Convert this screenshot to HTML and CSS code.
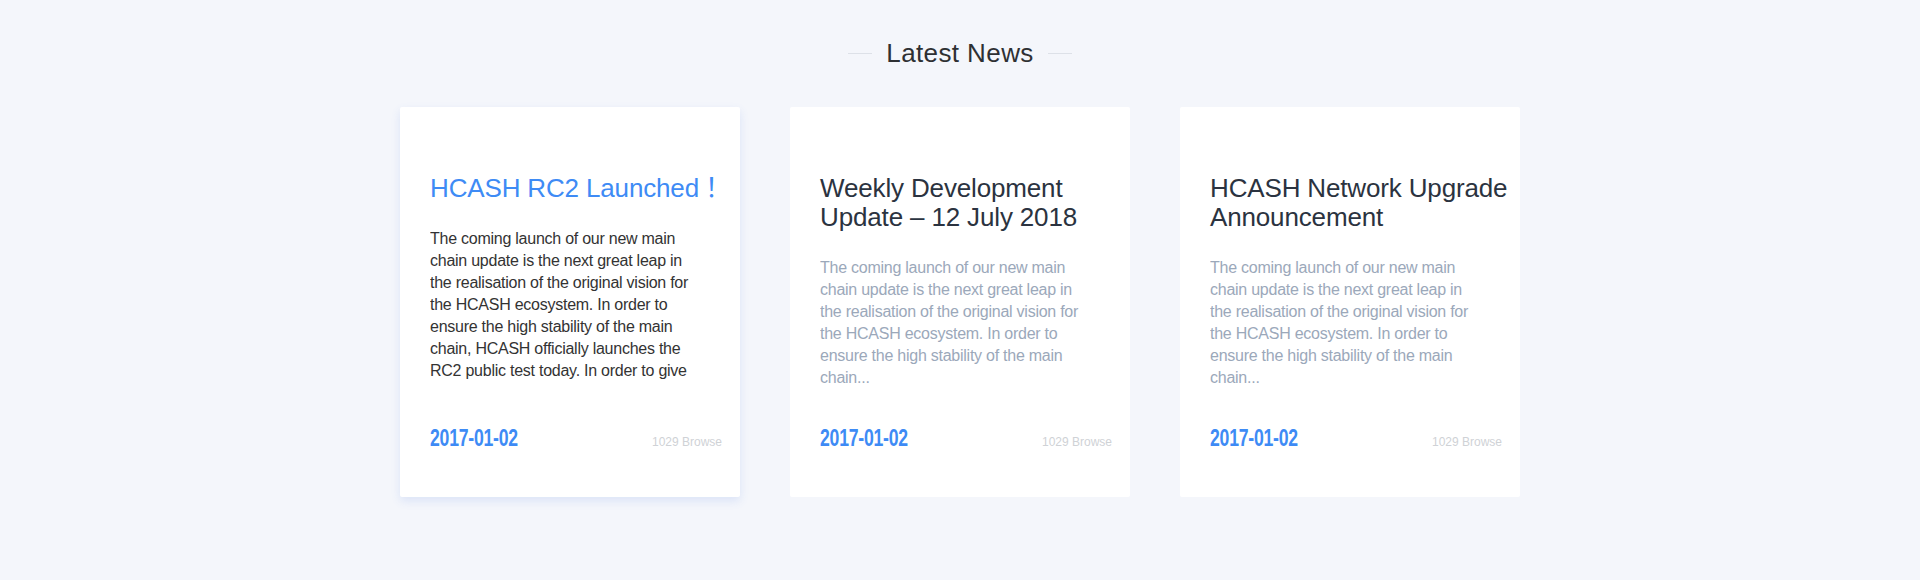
FILE: index.html
```html
<!DOCTYPE html>
<html lang="en">
<head>
<meta charset="utf-8">
<title>Latest News</title>
<link rel="stylesheet" href="styles.css">
</head>
<body>
<section class="news">
  <h2 class="news-heading"><span class="rule"></span><span class="heading-text">Latest News</span><span class="rule"></span></h2>
  <div class="news-list">
    <article class="card card--active">
      <div class="card-text">
        <h3 class="card-title">HCASH RC2 Launched<span class="bang">！</span></h3>
        <p class="card-excerpt">The coming launch of our new main chain update is the next great leap in the realisation of the original vision for the HCASH ecosystem. In order to ensure the high stability of the main chain, HCASH officially launches the RC2 public test today. In order to give the community more time to test the new features</p>
      </div>
      <div class="card-footer">
        <span class="card-date">2017-01-02</span>
        <span class="card-views">1029 Browse</span>
      </div>
    </article>
    <article class="card">
      <div class="card-text">
        <h3 class="card-title">Weekly Development Update – 12 July 2018</h3>
        <p class="card-excerpt">The coming launch of our new main chain update is the next great leap in the realisation of the original vision for the HCASH ecosystem. In order to ensure the high stability of the main chain...</p>
      </div>
      <div class="card-footer">
        <span class="card-date">2017-01-02</span>
        <span class="card-views">1029 Browse</span>
      </div>
    </article>
    <article class="card">
      <div class="card-text">
        <h3 class="card-title">HCASH Network Upgrade Announcement</h3>
        <p class="card-excerpt">The coming launch of our new main chain update is the next great leap in the realisation of the original vision for the HCASH ecosystem. In order to ensure the high stability of the main chain...</p>
      </div>
      <div class="card-footer">
        <span class="card-date">2017-01-02</span>
        <span class="card-views">1029 Browse</span>
      </div>
    </article>
  </div>
</section>
</body>
</html>
```

FILE: styles.css
```css
* { box-sizing: border-box; }
html, body {
  margin: 0;
  padding: 0;
  background: #f4f6fb;
}
body {
  font-family: "Liberation Sans", Arial, "Noto Sans CJK SC", sans-serif;
  color: #333;
  min-height: 580px;
}
.news {
  padding-top: 38px;
}
.news-heading {
  margin: 0;
  display: flex;
  justify-content: center;
  align-items: center;
  gap: 14px;
  font-size: 26px;
  line-height: 30px;
  font-weight: normal;
  color: #2e3033;
  letter-spacing: 0.4px;
}
.rule {
  width: 24px;
  height: 1px;
  background: #dde1e8;
}
.news-list {
  margin-top: 39px;
  display: flex;
  justify-content: center;
  gap: 50px;
}
.card {
  width: 340px;
  height: 390px;
  background: #fff;
  border-radius: 2px;
  padding: 67px 2px 0 30px;
  display: flex;
  flex-direction: column;
}
.card--active {
  box-shadow: 0 4px 10px rgba(70, 120, 230, 0.14);
}
.card-title {
  margin: 0;
  font-size: 26px;
  line-height: 29px;
  font-weight: normal;
  color: #2b3340;
  letter-spacing: -0.15px;
}
.bang {
  font-family: "Noto Sans CJK SC", sans-serif;
  line-height: 0;
  margin-left: 6px;
}
.card--active .card-title { color: #3e8bf5; }
.card-excerpt {
  margin: 25px 0 0;
  width: 266px;
  font-size: 16px;
  letter-spacing: -0.25px;
  line-height: 22px;
  color: #9ba8ba;
  max-height: 154px;
  overflow: hidden;
}
.card--active .card-excerpt { color: #333; }
.card-footer {
  margin-top: auto;
  padding: 0 16px 42px 0;
  display: flex;
  justify-content: space-between;
  align-items: baseline;
  line-height: 26px;
}
.card-date {
  display: inline-block;
  font-weight: bold;
  font-size: 23.5px;
  letter-spacing: -0.3px;
  color: #3e8bf5;
  transform: scaleX(0.75);
  transform-origin: left center;
}
.card-views {
  font-size: 12px;
  color: #cfd2d6;
}
```
